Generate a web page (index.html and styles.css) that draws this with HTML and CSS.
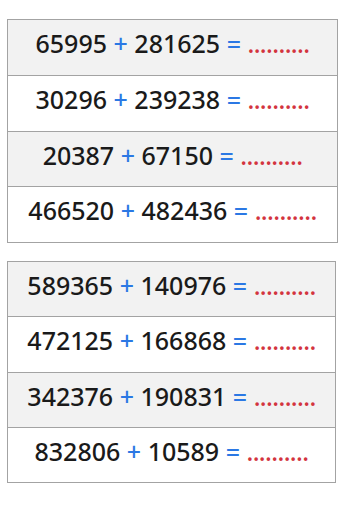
FILE: index.html
```html
<!DOCTYPE html>
<html>
<head>
<meta charset="utf-8">
<link rel="stylesheet" href="styles.css">
</head>
<body>
<div class="page">
  <table class="sums sums-a">
    <tr class="alt"><td>65995 <span class="op">+</span> 281625 <span class="op">=</span> <span class="blank">..........</span></td></tr>
    <tr><td>30296 <span class="op">+</span> 239238 <span class="op">=</span> <span class="blank">..........</span></td></tr>
    <tr class="alt"><td>20387 <span class="op">+</span> 67150 <span class="op">=</span> <span class="blank">..........</span></td></tr>
    <tr><td>466520 <span class="op">+</span> 482436 <span class="op">=</span> <span class="blank">..........</span></td></tr>
  </table>
  <table class="sums sums-b">
    <tr class="alt"><td>589365 <span class="op">+</span> 140976 <span class="op">=</span> <span class="blank">..........</span></td></tr>
    <tr><td>472125 <span class="op">+</span> 166868 <span class="op">=</span> <span class="blank">..........</span></td></tr>
    <tr class="alt"><td>342376 <span class="op">+</span> 190831 <span class="op">=</span> <span class="blank">..........</span></td></tr>
    <tr><td>832806 <span class="op">+</span> 10589 <span class="op">=</span> <span class="blank">..........</span></td></tr>
  </table>
</div>
</body>
</html>
```
FILE: styles.css
```css
html, body {
  margin: 0;
  padding: 0;
  background: #ffffff;
}
.page {
  padding: 19px 0 0 7px;
  display: flex;
  flex-direction: column;
  gap: 18px;
  align-items: flex-start;
}
.sums {
  border-collapse: collapse;
  border: 1px solid #a3a3a3;
  font-family: "Noto Sans", "Open Sans", sans-serif;
  font-size: 25px;
  font-weight: 500;
  color: #1a1a1a;
}
.sums-a { width: 331px; }
.sums-b { width: 329px; }
.sums td {
  border: 1px solid #a3a3a3;
  text-align: center;
  white-space: nowrap;
  line-height: 32px;
  padding: 7px 0 15.75px;
}
.sums-b td {
  padding: 7px 0 15.25px;
}
.sums tr.alt td {
  background: #f2f2f2;
}
.op {
  color: #2b78e4;
}
.blank {
  color: #d3343e;
  letter-spacing: -0.6px;
}
```
